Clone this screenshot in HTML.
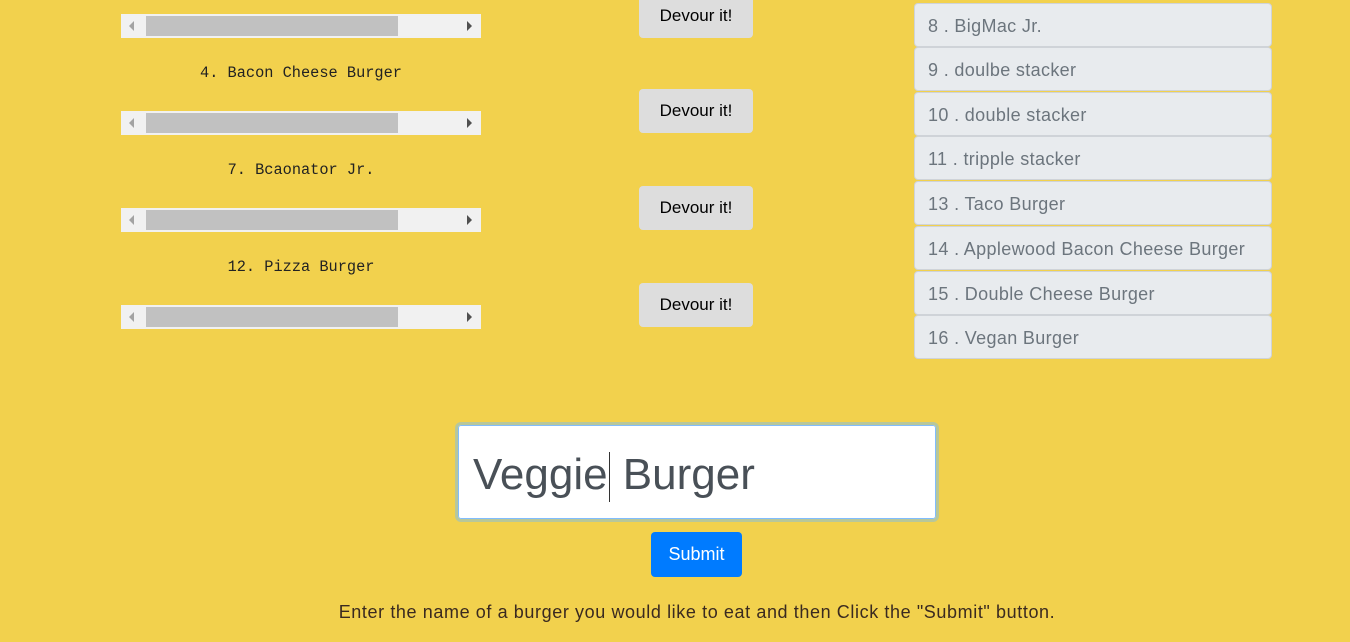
<!DOCTYPE html>
<html><head><style>
body{margin:0;width:1350px;height:642px;background:#f2d14d;position:relative;overflow:hidden;font-family:"Liberation Sans",sans-serif}
.sb{position:absolute;left:121px;width:360px;height:24px;background:#f1f1f1}
.sb .th{position:absolute;left:25px;top:2px;width:252px;height:20px;background:#c1c1c1}
.sb .l{position:absolute;left:8px;top:7px;width:0;height:0;border-top:5px solid transparent;border-bottom:5px solid transparent;border-right:5px solid #a3a3a3}
.sb .r{position:absolute;right:9px;top:7px;width:0;height:0;border-top:5px solid transparent;border-bottom:5px solid transparent;border-left:5px solid #505050}
.nm{position:absolute;left:121px;width:360px;text-align:center;font-family:"Liberation Mono",monospace;font-size:15.3px;color:#222}
.dv{position:absolute;left:639px;width:114px;height:44px;background:#ddd;border-radius:4px;font-size:17px;line-height:44px;text-align:center;color:#000}
.li{position:absolute;left:914px;height:42px;background:#e8ebee;border:1px solid #cfd3d8;border-radius:4px;font-size:18px;letter-spacing:0.35px;line-height:44px;color:#6c757d;box-sizing:content-box;padding-left:13px;width:343px}
</style></head><body>
<div class="sb" style="top:14px"><div class="l"></div><div class="th"></div><div class="r"></div></div>
<div class="nm" style="top:64px">4. Bacon Cheese Burger</div>
<div class="sb" style="top:111px"><div class="l"></div><div class="th"></div><div class="r"></div></div>
<div class="nm" style="top:161px">7. Bcaonator Jr.</div>
<div class="sb" style="top:208px"><div class="l"></div><div class="th"></div><div class="r"></div></div>
<div class="nm" style="top:258px">12. Pizza Burger</div>
<div class="sb" style="top:305px"><div class="l"></div><div class="th"></div><div class="r"></div></div>
<div class="dv" style="top:-6px">Devour it!</div>
<div class="dv" style="top:89px">Devour it!</div>
<div class="dv" style="top:186px">Devour it!</div>
<div class="dv" style="top:283px">Devour it!</div>
<div class="li" style="top:3px">8 . BigMac Jr.</div>
<div class="li" style="top:47px">9 . doulbe stacker</div>
<div class="li" style="top:92px">10 . double stacker</div>
<div class="li" style="top:136px">11 . tripple stacker</div>
<div class="li" style="top:181px">13 . Taco Burger</div>
<div class="li" style="top:226px">14 . Applewood Bacon Cheese Burger</div>
<div class="li" style="top:271px">15 . Double Cheese Burger</div>
<div class="li" style="top:315px">16 . Vegan Burger</div>
<div style="position:absolute;left:455px;top:422px;width:478px;height:94px;background:#fff;border:3px solid #b8c79a;border-radius:6px;box-shadow:inset 0 0 0 1px #80bdff"></div>
<div style="position:absolute;left:473px;top:447px;font-size:44px;line-height:56px;color:#495057">Veggie<span style="display:inline-block;width:1px;height:50px;background:#333;vertical-align:middle;margin:0 1px"></span> Burger</div>
<div style="position:absolute;left:651px;top:532px;width:91px;height:45px;background:#007bff;border-radius:4px;color:#fff;font-size:18px;line-height:45px;text-align:center">Submit</div>
<div style="position:absolute;left:0;width:1394px;top:602px;text-align:center;font-size:18px;letter-spacing:0.6px;color:#3a2a20">Enter the name of a burger you would like to eat and then Click the "Submit" button.</div>
</body></html>
